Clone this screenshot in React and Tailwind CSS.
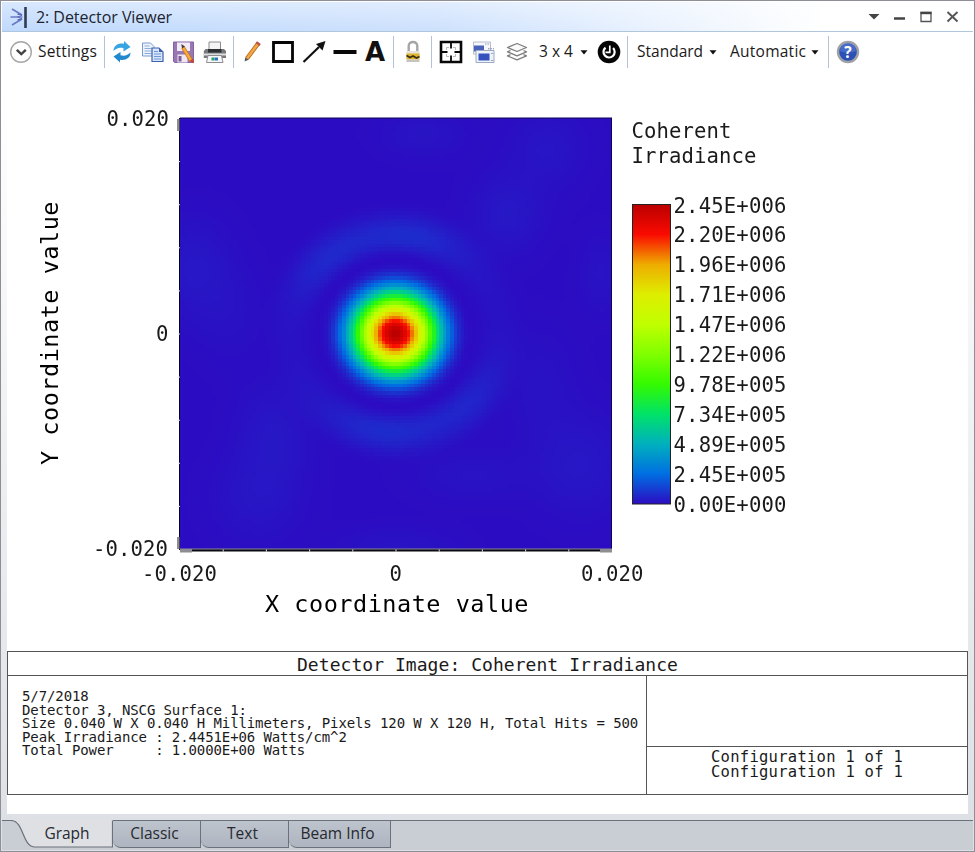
import { useLayoutEffect, useRef } from "react";

const MONO = "font-['DejaVu_Sans_Mono',monospace]";

const COLOR_STOPS = [
    [44, 12, 194],
    [0, 110, 226],
    [0, 176, 190],
    [0, 226, 104],
    [52, 250, 0],
    [128, 255, 0],
    [192, 255, 0],
    [222, 238, 0],
    [238, 172, 0],
    [250, 10, 0],
    [186, 0, 0],
];

const LEGEND = [
    "2.45E+006", "2.20E+006", "1.96E+006", "1.71E+006", "1.47E+006", "1.22E+006",
    "9.78E+005", "7.34E+005", "4.89E+005", "2.45E+005", "0.00E+000",
];

// faint speckle around the main spot: x, y, sigma x, sigma y, amplitude
const SPECKLE = [
    [-202, -65, 26, 34, 0.011],
    [152, -185, 26, 26, 0.009],
    [112, -120, 24, 26, 0.012],
    [28, -200, 28, 16, 0.008],
    [-122, 102, 24, 34, 0.011],
    [-138, 165, 30, 30, 0.009],
    [185, 132, 30, 34, 0.011],
    [78, 142, 40, 18, 0.007],
    [-165, -20, 24, 34, 0.005],
    [145, 52, 24, 40, 0.006],
    [0, 212, 40, 12, 0.007],
    [205, -60, 14, 26, 0.007],
];

function besselJ1(x) {
    let term = x / 2;
    let sum = term;
    for (let k = 1; k < 30; k++) {
        term *= -(x * x) / 4 / (k * (k + 1));
        sum += term;
    }
    return sum;
}

function irradiance(x, y) {
    const v = Math.hypot(x / 1.05, y) / 19.2;
    let value = 0;
    if (v < 0.001) {
        value = 1;
    } else if (v < 7.016) {
        value = Math.pow((2 * besselJ1(v)) / v, 2);
        if (v > 3.83) {
            const angle = Math.atan2(y, x);
            const lobe = (center, width) => {
                const d = Math.atan2(Math.sin(angle - center), Math.cos(angle - center));
                return Math.exp(-(d * d) / (2 * width * width));
            };
            value *= 0.3 + 1.5 * lobe(-1.4, 0.4) + 1.2 * lobe(-2.3, 0.34) + 1.5 * lobe(1.68, 0.42) + 1.0 * lobe(0.75, 0.32);
        }
    }
    SPECKLE.forEach(([cx, cy, sx, sy, a]) => {
        value += a * Math.exp(-((x - cx) ** 2) / (2 * sx * sx) - ((y - cy) ** 2) / (2 * sy * sy));
    });
    return Math.min(value, 1);
}

function colorAt(value) {
    const t = value * (COLOR_STOPS.length - 1);
    const i = Math.min(Math.floor(t), COLOR_STOPS.length - 2);
    return COLOR_STOPS[i].map((c, k) => c + (COLOR_STOPS[i + 1][k] - c) * (t - i));
}

function Heatmap() {
    const ref = useRef(null);

    useLayoutEffect(() => {
        const ctx = ref.current.getContext("2d");
        const image = ctx.createImageData(120, 120);
        for (let row = 0; row < 120; row++) {
            for (let col = 0; col < 120; col++) {
                const [r, g, b] = colorAt(irradiance((col - 59.3) * 3.6, (row - 59.5) * 3.6));
                image.data.set([r, g, b, 255], (row * 120 + col) * 4);
            }
        }
        ctx.putImageData(image, 0, 0);
    }, []);

    return <canvas ref={ref} width={120} height={120} className="absolute left-[173px] top-[46px] h-[431px] w-[432px] [image-rendering:pixelated]" />;
}

function Label({ x, y, width, size = 20.6, children, ...rest }) {
    return (
        <text x={x} y={y} fontSize={size} textLength={width} lengthAdjust="spacing" xmlSpace="preserve" {...rest}>{children}</text>
    );
}

function Chart() {
    const ticks = [1, 2, 3, 4, 5, 6, 7, 8, 9];
    return (
        <div className="relative h-[579px] w-[961px]">
            <Heatmap />
            <svg className={`absolute inset-0 ${MONO}`} width="961" height="579" viewBox="7 72 961 579" fill="#1a1a1a">
                <defs>
                    <linearGradient id="scale" x1="0" y1="1" x2="0" y2="0">
                        {COLOR_STOPS.map((c, i) => <stop key={i} offset={i / 10} stopColor={`rgb(${c.join(",")})`} />)}
                    </linearGradient>
                </defs>
                <path d="M180 118h432M611.5 118v431" stroke="#0a0654" fill="none" />
                <path d="M179.5 118v432" stroke="#050510" />
                <rect x="180" y="548.500" width="432" height="1.500" fill="#8a8a96" />
                <rect x="180" y="549.500" width="432" height="2" fill="#0a0a12" />
                {ticks.map(i => (
                    <g key={i} fill="#e8e8f0">
                        <rect x="178" y={118 + i * 43.1} width="2" height="1" />
                        <rect x={179.5 + i * 43.2} y="549.500" width="1" height="2" />
                    </g>
                ))}
                <path d="M177 119h2.500v12h-2.500zM177 537h2.500v12h-2.500zM180 549h12v3.500h-12zM600 549h12v3.500h-12z" fill="#8d8d92" />

                <Label x="106.500" y="126" width="62.500">0.020</Label>
                <Label x="156" y="341">0</Label>
                <Label x="93" y="556" width="75">-0.020</Label>
                <Label x="142" y="580.500" width="75">-0.020</Label>
                <Label x="389.500" y="580.500">0</Label>
                <Label x="581" y="580.500" width="62.500">0.020</Label>
                <Label x="265" y="612" width="263.500" size={23.5} fill="#000">X coordinate value</Label>
                <Label x="-465" y="57.500" width="263.500" size={23.5} fill="#000" transform="rotate(-90)">Y coordinate value</Label>

                <Label x="631.500" y="138" width="100">Coherent</Label>
                <Label x="631.500" y="163" width="125">Irradiance</Label>
                <rect x="632.500" y="204.500" width="38" height="299.500" fill="url(#scale)" stroke="#222" />
                {LEGEND.map((text, i) => (
                    <Label key={text + i} x="673.500" y={212.5 + i * 29.95} width="113">{text}</Label>
                ))}
            </svg>
        </div>
    );
}

function Icon({ children, className = "" }) {
    return (
        <svg width="24" height="24" viewBox="0 0 24 24" fill="none" className={`shrink-0 ${className}`}>{children}</svg>
    );
}

function Separator({ className = "" }) {
    return <div className={`h-[32px] w-px shrink-0 bg-[#b3c3d5] ${className}`} />;
}

function Caret({ className = "" }) {
    return (
        <svg width="8" height="5" viewBox="0 0 8 5" className={`shrink-0 ${className}`}><path d="M.5.3h7L4 4.600z" fill="#111" /></svg>
    );
}

function TitleBar() {
    return (
        <div className="flex h-[30px] items-center border-b border-[#b0c6dc] bg-linear-to-r from-[#bfd9fd] via-[#cde1fd] via-45% to-white to-85%">
            <div className="flex h-full w-full items-center bg-linear-to-b from-white/40 to-white/0">
                <svg width="20" height="24" viewBox="0 0 20 24" className="ml-[7px] shrink-0" fill="none">
                    <path d="M3 4l10 6M1.500 12h10M3 20l10-6" stroke="#6a78c8" strokeWidth="1.600" />
                    <path d="M8.500 9l4.500 1.500M8.500 12h5M8.500 15l4.500-1.500" stroke="#4c5aa8" strokeWidth="1.200" />
                    <path d="M16.500 2v21" stroke="#303c50" strokeWidth="2.600" />
                </svg>
                <span className="ml-[7px] whitespace-nowrap text-[16px] tracking-[-0.05px] text-[#1c2430]">2: Detector Viewer</span>
                <svg width="92" height="14" viewBox="0 0 92 14" className="mr-[13px] ml-auto shrink-0" fill="none">
                    <path d="M.5 4h11L6 9.500z" fill="#444" />
                    <path d="M26 8.500h11" stroke="#444" strokeWidth="2.500" />
                    <path d="M53 2.500h10v9H53z" stroke="#555" strokeWidth="1.300" />
                    <path d="M52.500 3h11" stroke="#444" strokeWidth="2.400" />
                    <path d="M79.500 2l10 9.500M89.500 2l-10 9.500" stroke="#555" strokeWidth="1.900" />
                </svg>
            </div>
        </div>
    );
}

function Toolbar() {
    return (
        <div className="flex h-[40px] items-center pl-[7px] text-[15.5px] whitespace-nowrap text-[#1a1a1a]">
            <Icon>
                <circle cx="12" cy="12" r="10.300" fill="#fff" stroke="#a6a6a6" strokeWidth="1.400" />
                <path d="M7.800 9.800l4.500 4.300 4.500-4.300" stroke="#444" strokeWidth="2.500" />
            </Icon>
            <span className="ml-[5px] w-[60px] tracking-[0.2px]">Settings</span>
            <Separator className="ml-[6px]" />

            <div className="ml-[5px] flex gap-[7px]">
                <Icon>
                    <path d="M3.500 11C3.500 5.500 8.500 2.800 14 3.800V1l6.500 6-7 4.500V8.300C9.500 7 6 8.500 3.500 11z" fill="#38a4e2" />
                    <path d="M20.500 12.500c0 5.500-5 8.200-10.500 7.200v2.800l-6.500-6 7-4.500v3.200c4 1.300 7.500-.2 10-2.700z" fill="#2389cf" />
                </Icon>
                <Icon>
                    <path d="M1.500 3h8l3.500 3.500V16H1.500z" fill="#edf3fc" stroke="#7b9bd0" />
                    <path d="M3.500 6h5M3.500 8.500h7M3.500 11h7M3.500 13.500h7" stroke="#8fabd9" />
                    <path d="M11 8h7l4 4v9.500H11z" fill="#d6e5fa" stroke="#3c62ad" strokeWidth="1.200" />
                    <path d="M18 8v4h4z" fill="#3c62ad" />
                    <path d="M13 11.500h4M13 14h7M13 16.500h7M13 19h7" stroke="#6f97d8" />
                </Icon>
                <Icon>
                    <path d="M1.500 2h20v20.500h-19l-1-1z" fill="#9878b4" stroke="#84649f" />
                    <path d="M5 2.500h13V11H5z" fill="#f2eaf6" />
                    <path d="M5.500 14.500h10v8h-10z" fill="#eee7f2" />
                    <path d="M6.500 16h3v5.500h-3z" fill="#7c5d98" />
                    <path d="M11 7.500l8 13" stroke="#c8741c" strokeWidth="4" />
                    <path d="M11 7.500l8 13" stroke="#f5aa3c" strokeWidth="2.400" />
                    <path d="M17.300 21l3.500-2.300 1.200 4.500z" fill="#d04520" />
                    <path d="M9.300 4l3.700 2.500-3 2z" fill="#463a30" />
                </Icon>
                <Icon>
                    <path d="M6 2h11.500v8H6z" fill="#f4f4f4" stroke="#8c8c8c" />
                    <path d="M2.500 9h18.500l2 2v7H.8v-7z" fill="#77797b" />
                    <path d="M5 9h13.500v3.500H5z" fill="#2e3134" />
                    <path d="M1 14.500h22" stroke="#dcdedf" strokeWidth="2" />
                    <path d="M5 15.500h13.500L20 22.500H3.500z" fill="#f5f7fa" stroke="#8c8c8c" />
                    <path d="M8.500 17.500h3.200v3H8.500z" fill="#28a06c" />
                    <path d="M12 17.500h3v3h-3z" fill="#2d70c0" />
                </Icon>
            </div>
            <Separator className="ml-[6px]" />

            <div className="ml-[6px] flex gap-[7px]">
                <Icon>
                    <path d="M18.500 3L7 18.500" stroke="#bd6c1d" strokeWidth="4.400" />
                    <path d="M18.500 3L7 18.500" stroke="#f3a846" strokeWidth="2.500" />
                    <path d="M17 1.200l3.800 2.800-1.400 2-3.700-2.800z" fill="#b8554a" />
                    <path d="M5.300 17.200l3.400 2.600L4.500 21.500z" fill="#5a5a5a" />
                </Icon>
                <Icon><path d="M2.500 2.500h19v19h-19z" stroke="#050505" strokeWidth="2.800" /></Icon>
                <Icon>
                    <path d="M1.500 22L17 7" stroke="#111" strokeWidth="2.200" />
                    <path d="M23.500 1l-3 9.500-6.500-6.500z" fill="#111" />
                </Icon>
                <Icon><path d="M.5 12h23" stroke="#080808" strokeWidth="4" /></Icon>
                <span className="-ml-px flex h-6 w-6 items-center justify-center font-['DejaVu_Sans',sans-serif] text-[26px] leading-none font-bold text-[#111]">A</span>
            </div>
            <Separator className="ml-[6px]" />
            <Icon className="ml-[7px]">
                <path d="M7.700 12V6c0-5.300 8.600-5.300 8.600 0v6" stroke="#a6a6a6" strokeWidth="2.400" />
                <path d="M5.500 11h13v5h-13z" fill="#e6e3da" />
                <path d="M5.500 13.500h13v6h-13z" fill="#e1b32c" />
                <path d="M5.500 15.500l3.500 2 3-1.500 3.500 2 3-1.500" stroke="#3a3218" strokeWidth="1.800" />
                <path d="M5.500 19.500h13v2.500h-13z" fill="#c6c3c0" />
            </Icon>
            <Separator className="ml-[6px]" />

            <div className="ml-[7px] flex gap-[9px]">
                <Icon>
                    <path d="M2 2h20v20H2z" stroke="#080808" strokeWidth="2.600" />
                    <path d="M12 2v6.500M12 15.500v6.500M2 12h6.500M15.500 12h6.500" stroke="#080808" strokeWidth="1.800" />
                    <path d="M10 7.500H7.500V10M14 7.500h2.500V10M10 16.500H7.500V14M14 16.500h2.500V14" stroke="#aaa" strokeWidth=".8" />
                </Icon>
                <Icon>
                    <path d="M1.500 2h17v12h-17z" fill="#f5f7fb" stroke="#b4bccd" />
                    <path d="M2 5.500h10v6H2z" fill="#4a62bb" />
                    <path d="M13 4h5" stroke="#8d97ac" strokeDasharray="1.500 1" />
                    <path d="M6 10.500h16V22.500H4V10.500z" fill="#eef2f9" stroke="#9daac3" />
                    <path d="M6.500 13.500h11v7h-11z" fill="#3551bd" />
                    <path d="M16 8.800h6" stroke="#7a869e" strokeDasharray="1.500 1" />
                    <path d="M19 13.500h2.500M19 20.500h2.500" stroke="#9daac3" />
                </Icon>
                <Icon>
                    <g stroke="#7d7d7d" strokeWidth="1.300" strokeLinejoin="round">
                        <path d="M12 3.500l9.500 4L12 11.500l-9.500-4z" fill="#fafafa" />
                        <path d="M5.500 10.500l-3 1.300 9.500 4 9.500-4-3-1.300" />
                        <path d="M5.500 14.600l-3 1.300 9.500 4 9.500-4-3-1.300" />
                    </g>
                </Icon>
            </div>
            <span className="ml-[10px] w-[37px] text-[15.5px]">3 x 4</span>
            <Caret className="ml-[4px]" />
            <Icon className="ml-[9px]">
                <circle cx="12" cy="12" r="11.300" fill="#050505" />
                <path d="M8.500 7.600a5.600 5.600 0 1 0 7.600.4" stroke="#fff" strokeWidth="2.200" />
                <path d="M12.800 5.500v6.800H8.500" stroke="#fff" strokeWidth="1.700" />
            </Icon>
            <Separator className="ml-[6px]" />
            <span className="ml-[9px] w-[67px]">Standard</span>
            <Caret className="ml-[5px]" />
            <span className="ml-[13px] w-[77px] tracking-[0.25px]">Automatic</span>
            <Caret className="ml-[4px]" />
            <Separator className="ml-[9px]" />
            <Icon className="ml-[7px]">
                <circle cx="12" cy="12" r="10" fill="#2c50b4" stroke="#9fa1a6" strokeWidth="2.400" />
                <path d="M4 11a8 8 0 0 1 16 0c-5 2-11 2-16 0z" fill="#5f86dc" opacity=".5" />
                <text x="12" y="17.500" textAnchor="middle" fontSize="15.500" fontWeight="700" fill="#fff">?</text>
            </Icon>
        </div>
    );
}

function InfoPanel() {
    const lines = [
        "5/7/2018",
        "Detector 3, NSCG Surface 1:",
        "Size 0.040 W X 0.040 H Millimeters, Pixels 120 W X 120 H, Total Hits = 500",
        "Peak Irradiance : 2.4451E+06 Watts/cm^2",
        "Total Power     : 1.0000E+00 Watts",
    ];
    return (
        <div className={`h-[144px] w-[961px] border border-[#555] text-[#1a1a1a] ${MONO}`}>
            <div className="h-[24px] border-b border-[#555] text-center text-[18px] leading-[25px] tracking-[0.05px]">Detector Image: Coherent Irradiance</div>
            <div className="flex h-[118px]">
                <div className="w-[639px] shrink-0 border-r border-[#555] pt-[14px] pl-[14px] text-[14px] leading-[13.6px] tracking-[-0.103px] whitespace-pre">
                    {lines.map(line => <div key={line}>{line}</div>)}
                </div>
                <div className="flex flex-1 flex-col">
                    <div className="h-[71px] border-b border-[#555]" />
                    <div className="pt-[3px] text-center text-[15.5px] leading-[15px] tracking-[0.27px]">
                        <div>Configuration 1 of 1</div>
                        <div>Configuration 1 of 1</div>
                    </div>
                </div>
            </div>
        </div>
    );
}

function Tabs() {
    const tabs = [
        { name: "Classic", width: "w-[88px]" },
        { name: "Text", width: "w-[88px]" },
        { name: "Beam Info", width: "w-[102px]" },
    ];
    return (
        <div className="flex h-[30px] bg-[#c9cdd4] text-[15.5px] text-[#262a30]">
            <div className="relative h-[28px] w-[111px]">
                <svg width="111" height="28" viewBox="0 0 111 28" className="absolute inset-0">
                    <path d="M0 0h111v27H33C20 27 22 .5 9 .5H0z" fill="#dee0e4" />
                    <path d="M0 .5h9C22 .5 20 27 33 27h77.500V.5" fill="none" stroke="#6b717b" strokeWidth="1.200" />
                </svg>
                <span className="relative flex h-[27px] items-center justify-center pl-[19px]">Graph</span>
            </div>
            {tabs.map(tab => (
                <div key={tab.name} className={`h-[28px] rounded-bl-[8px] border-t border-r border-b border-[#6b717b] bg-linear-to-b from-[#bec4cd] to-[#aeb5c0] pr-[4px] text-center leading-[25px] ${tab.width}`}>{tab.name}</div>
            ))}
            <div className="flex-1 border-t border-[#6b717b]" />
        </div>
    );
}

export default function App() {
    return (
        <div className="h-[852px] w-[975px] overflow-hidden border border-[#8e8e96] bg-linear-to-b from-white from-10% via-[#f0f1f3] via-50% to-[#dcdfe4] p-px font-['Open_Sans',sans-serif]">
            <TitleBar />
            <Toolbar />
            <div className="ml-[5px] h-[742px] w-[961px] bg-white">
                <Chart />
                <InfoPanel />
            </div>
            <div className="mt-[6px]">
                <Tabs />
            </div>
        </div>
    );
}
